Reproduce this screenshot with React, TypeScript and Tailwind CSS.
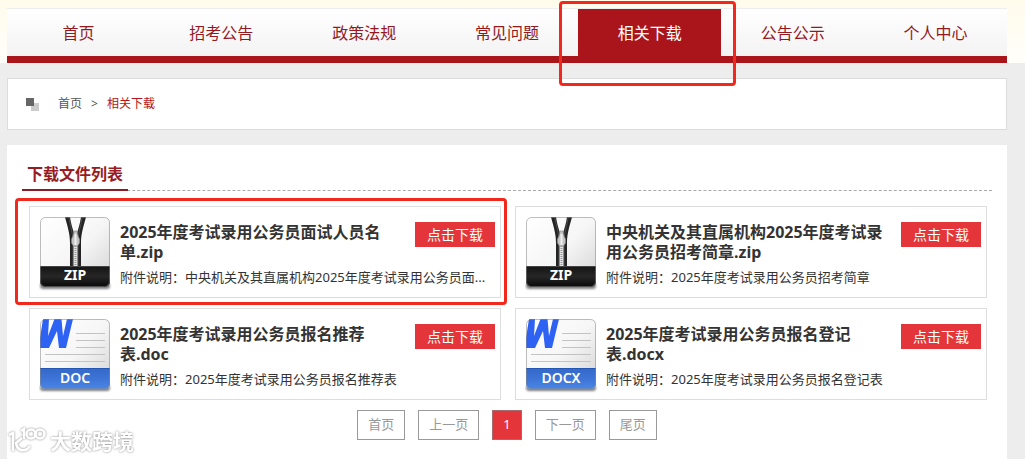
import React from 'react';

type FileKind = 'ZIP' | 'DOC' | 'DOCX';

interface DownloadFile {
  title: string;
  description: string;
  kind: FileKind;
  marked?: boolean;
}

const NAV_ITEMS = ['首页', '招考公告', '政策法规', '常见问题', '相关下载', '公告公示', '个人中心'];
const ACTIVE_NAV = '相关下载';

const FILES: DownloadFile[] = [
  {
    title: '2025年度考试录用公务员面试人员名单.zip',
    description: '中央机关及其直属机构2025年度考试录用公务员面...',
    kind: 'ZIP',
    marked: true,
  },
  {
    title: '中央机关及其直属机构2025年度考试录用公务员招考简章.zip',
    description: '2025年度考试录用公务员招考简章',
    kind: 'ZIP',
  },
  {
    title: '2025年度考试录用公务员报名推荐表.doc',
    description: '2025年度考试录用公务员报名推荐表',
    kind: 'DOC',
  },
  {
    title: '2025年度考试录用公务员报名登记表.docx',
    description: '2025年度考试录用公务员报名登记表',
    kind: 'DOCX',
  },
];

const PAGES = ['首页', '上一页', '1', '下一页', '尾页'];

function Marker({ className }: { className: string }): React.JSX.Element {
  return (
    <span
      aria-hidden="true"
      className={`pointer-events-none absolute z-10 rounded-sm border-3 border-[#f3281c] ${className}`}
    />
  );
}

function FileIcon({ kind, id }: { kind: FileKind; id: string }): React.JSX.Element {
  const isZip = kind === 'ZIP';
  return (
    <svg width="74" height="76" viewBox="0 0 74 76" className="shrink-0" aria-hidden="true">
      <defs>
        <linearGradient id={`${id}-paper`} x1="0" y1="0" x2="1" y2="1">
          <stop offset="0" stopColor="#ffffff" />
          <stop offset="0.5" stopColor="#f6f6f6" />
          <stop offset="1" stopColor="#d2d2d2" />
        </linearGradient>
        <linearGradient id={`${id}-label`} x1="0" y1="0" x2="0" y2="1">
          <stop offset="0" stopColor={isZip ? '#141414' : '#3468c8'} />
          <stop offset="0.5" stopColor={isZip ? '#262626' : '#3d74d6'} />
          <stop offset="1" stopColor={isZip ? '#080808' : '#4a86e6'} />
        </linearGradient>
        <clipPath id={`${id}-clip`}>
          <rect x="1" y="1" width="70" height="70" rx="5" />
        </clipPath>
        <filter id={`${id}-blur`} x="-10%" y="-100%" width="120%" height="300%">
          <feGaussianBlur stdDeviation="1.2" />
        </filter>
      </defs>
      <rect x="1" y="67" width="70" height="6" rx="3" fill="#555" opacity="0.75" filter={`url(#${id}-blur)`} />
      <g clipPath={`url(#${id}-clip)`}>
        <rect x="1" y="1" width="70" height="70" fill={`url(#${id}-paper)`} />
        {isZip ? (
          <>
            <path d="M26 1H31C32 8 33.5 12 35 17V51H31V27C31 17 28 9 26 1Z" fill="#242424" />
            <path d="M47 1H42C41 8 39.500 12 38 17V51H42V27C42 17 45 9 47 1Z" fill="#242424" />
            <path d="M30 2C31 10 34 17 34 24V50M43 2C42 10 39 17 39 24V50" fill="none" stroke="#666" strokeWidth="0.6" />
            <path d="M36.5 26V51" stroke="#e4e4e4" strokeWidth="4" />
            <path d="M36.5 28V51" stroke="#999" strokeWidth="2" strokeDasharray="1 1" />
            <path d="M35 15H38L39 20L40.500 23V27L38.500 30H34.500L32.500 27V23L34 20Z" fill="#c4c4c4" stroke="#888" strokeWidth="0.6" />
            <path d="M35.500 18H37.500V29H35.500Z" fill="#efefef" />
          </>
        ) : (
          <>
            <path d="M4 1H10L9 18L15.5 1H22.500L24 18L28 1H34L27 30H20L18 13L10 30H1V20Z" fill="#2d62f2" />
            <path d="M37 15.5H66M37 22.5H66M37 29.5H66M6 36.500H66M6 43.500H66" stroke="#c3c3c3" strokeWidth="1" />
          </>
        )}
        <rect x="1" y="50" width="70" height="21" fill={`url(#${id}-label)`} />
        <path d="M1 50.5H71" stroke={isZip ? '#444' : '#2456b4'} />
      </g>
      <rect x="1.5" y="1.5" width="69" height="69" rx="5" fill="none" stroke="#888" strokeOpacity="0.55" />
      <text
        x="36"
        y={isZip ? 64 : 65}
        textAnchor="middle"
        fontFamily="Noto Sans, sans-serif"
        fontSize="14"
        fontWeight={isZip ? 700 : 600}
        fill="#fff"
      >
        {kind}
      </text>
    </svg>
  );
}

function FileCard({ file, id }: { file: DownloadFile; id: string }): React.JSX.Element {
  return (
    <li className="relative flex h-[92px] gap-[7px] border border-[#ddd] pt-[9px] pr-[5px] pl-[9px]">
      <FileIcon kind={file.kind} id={id} />
      <div className="min-w-0 flex-1 pt-1.5">
        <div className="flex items-start gap-[14px]">
          <h3 className="h-10 flex-1 text-base leading-5 font-bold text-[#333]">{file.title}</h3>
          <button type="button" className="h-[25px] w-20 shrink-0 bg-[#e4353a] text-sm leading-[25px] text-white">
            点击下载
          </button>
        </div>
        <p className="mt-[5px] text-[13px] leading-5 whitespace-nowrap text-[#333]">附件说明：{file.description}</p>
      </div>
      {file.marked && <Marker className="-top-[9px] -right-[7px] -bottom-[8px] -left-[15px]" />}
    </li>
  );
}

function Watermark(): React.JSX.Element {
  return (
    <div className="pointer-events-none fixed bottom-1 left-2 flex items-center gap-1 text-white [filter:drop-shadow(0_0_1px_#888)]">
      <svg width="38" height="28" viewBox="0 0 38 28" fill="none" stroke="currentColor" strokeWidth="2.6" aria-hidden="true">
        <path d="M1 8L5 6V24M14 11L8 16C9 24 17 26 22 19" />
        <path d="M13 4L16 2V12" />
        <circle cx="23" cy="7" r="4.500" />
        <circle cx="32" cy="7" r="4.500" />
      </svg>
      <span className="text-[21px] leading-7 font-bold">大数跨境</span>
    </div>
  );
}

export default function App(): React.JSX.Element {
  return (
    <div className="flex min-h-screen flex-col bg-[#ededed] font-['Noto_Sans','Noto_Sans_CJK_SC',sans-serif] text-[#333]">
      {/* Main navigation */}
      <header className="bg-linear-to-b from-[#fffcec] to-[#fffefa] px-[7px] pt-2">
        <nav className="max-w-[1000px] border-t border-b-7 border-t-[#eee] border-b-[#a9151b] bg-linear-to-b from-white to-[#f3f3f3]">
          <ul className="grid grid-cols-7">
            {NAV_ITEMS.map((item) => (
              <li key={item} className="relative">
                <a
                  href="#"
                  className={`block h-[47px] text-center text-base leading-[48px] ${
                    item === ACTIVE_NAV ? 'bg-[#a9151b] text-white' : 'text-[#93191f]'
                  }`}
                >
                  {item}
                </a>
                {item === ACTIVE_NAV && <Marker className="-top-[8px] -right-[15px] -bottom-[30px] -left-[19px]" />}
              </li>
            ))}
          </ul>
        </nav>
      </header>

      <div className="flex flex-1 flex-col px-[7px] pt-[15px]">
        {/* Breadcrumb */}
        <nav className="flex h-[52px] max-w-[1000px] items-center border border-[#dcdcdc] bg-white pl-[18px] text-xs leading-[18px]">
          <svg width="13" height="13" viewBox="0 0 13 13" aria-hidden="true">
            <path d="M5 5H13V13H5Z" fill="#ccc" />
            <path d="M0 0H8V8H0Z" fill="#666" />
          </svg>
          <a href="#" className="ml-[19px] text-[#555]">
            首页
          </a>
          <span className="mx-[9px] text-[#555]">&gt;</span>
          <a href="#" className="text-[#b5121a]">
            相关下载
          </a>
        </nav>

        {/* Download list */}
        <main className="mt-[15px] max-w-[1000px] flex-1 bg-white px-[15px] pt-[15px] pb-[19px]">
          <div className="flex border-b border-dashed border-[#aaa]">
            <h2 className="-mb-px border-b-2 border-[#8a1c22] px-[5px] text-base leading-[29px] font-bold text-[#981b21]">
              下载文件列表
            </h2>
          </div>
          <ul className="mt-[15px] mr-[5px] ml-[7px] grid grid-cols-2 gap-x-[14px] gap-y-[10px]">
            {FILES.map((file, index) => (
              <FileCard key={file.title} file={file} id={`file-${index}`} />
            ))}
          </ul>

          {/* Pagination */}
          <div className="mt-[10px] flex justify-center gap-[13px]">
            {PAGES.map((page) => (
              <button
                key={page}
                type="button"
                className={`h-[30px] border px-[10px] text-[13px] ${
                  page === '1' ? 'border-[#a86b6d] bg-[#e4353a] text-white' : 'border-[#999] text-[#999]'
                }`}
              >
                {page}
              </button>
            ))}
          </div>
        </main>
      </div>

      <Watermark />
    </div>
  );
}
